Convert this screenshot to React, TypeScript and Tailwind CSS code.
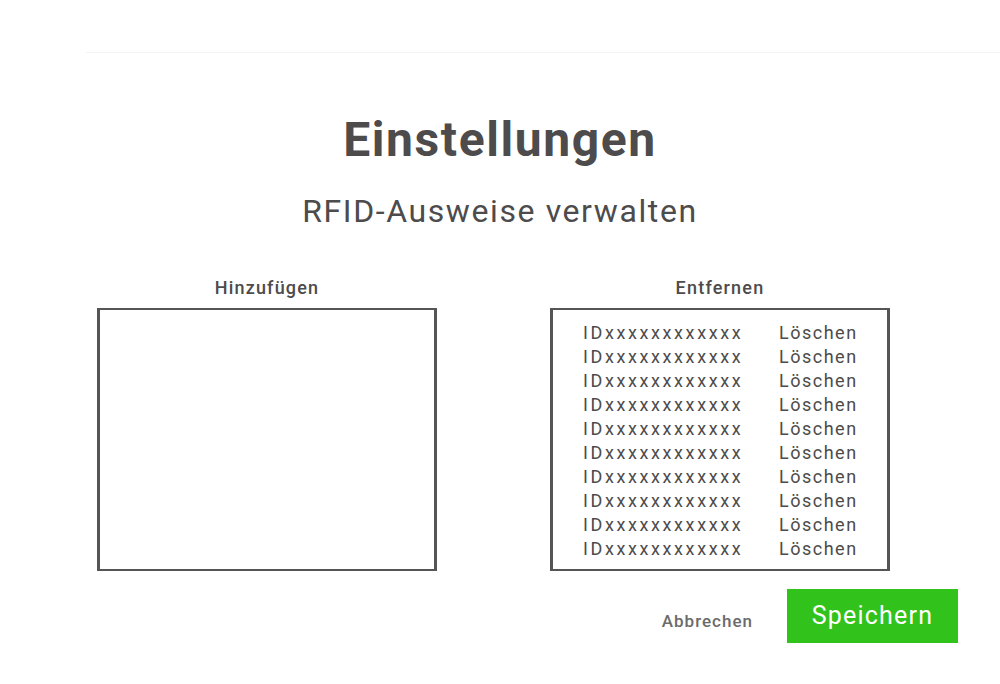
import React from "react";

const ids = Array.from({ length: 10 }, () => "IDxxxxxxxxxxxx");

export default function App() {
  return (
    <div
      className="w-[1000px] h-[684px] bg-white text-[#4d4b4b] overflow-hidden"
      style={{ fontFamily: "Roboto, 'Noto Sans', sans-serif" }}
    >
      <div className="ml-[86px] h-[53px] border-b border-[#f3f3f3]" />
      <h1 className="mt-[61px] text-center text-[48px] leading-[52px] font-bold tracking-[1.6px]">
        Einstellungen
      </h1>
      <h2 className="mt-[25px] text-center text-[32px] leading-[40px] font-normal tracking-[1.6px]">
        RFID-Ausweise verwalten
      </h2>
      <div className="mt-[45px] flex pl-[97px] gap-[113px]">
        <div className="flex flex-col items-center w-[340px]">
          <div className="text-[18px] leading-[24px] font-medium tracking-[1.2px]">Hinzufügen</div>
          <div className="mt-[8px] w-[340px] h-[263px] border-x-[3px] border-y-2 border-[#555]" />
        </div>
        <div className="flex flex-col items-center w-[340px]">
          <div className="text-[18px] leading-[24px] font-medium tracking-[1.2px]">Entfernen</div>
          <div className="mt-[8px] w-[340px] h-[263px] border-x-[3px] border-y-2 border-[#555] pt-[11px] flex flex-col">
            {ids.map((id, i) => (
              <div key={i} className="flex justify-center gap-[36px] text-[18px] leading-[24px]">
                <span className="w-[160px] font-normal tracking-[2.6px]">{id}</span>
                <span className="w-[78px] font-normal tracking-[1.5px]">Löschen</span>
              </div>
            ))}
          </div>
        </div>
      </div>
      <div className="mt-[18px] flex justify-end items-center pr-[42px] gap-[34px]">
        <span className="text-[17px] font-medium text-[#6b6b6b] tracking-[1px] mt-[11px]">Abbrechen</span>
        <button className="w-[171px] h-[54px] bg-[#31c21b] text-white text-[25px] font-normal tracking-[1.2px]">
          Speichern
        </button>
      </div>
    </div>
  );
}
